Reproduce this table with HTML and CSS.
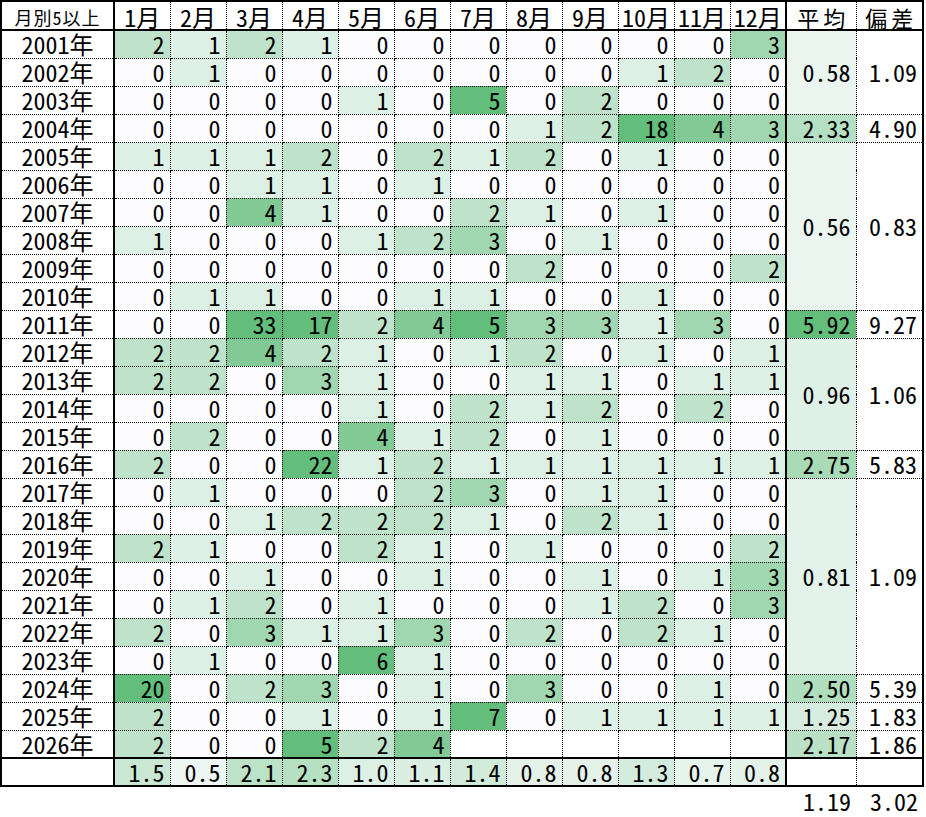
FILE: index.html
```html
<!DOCTYPE html>
<html lang="ja">
<head>
<meta charset="utf-8">
<title>月別5以上</title>
<link rel="stylesheet" href="styles.css">
</head>
<body>
<table class="sheet">
<colgroup>
<col class="c-yr">
<col class="c-m"><col class="c-m"><col class="c-m"><col class="c-m"><col class="c-m"><col class="c-m">
<col class="c-m"><col class="c-m"><col class="c-m"><col class="c-m"><col class="c-m"><col class="c-m">
<col class="c-avg"><col class="c-dev">
</colgroup>
<thead>
<tr class="hdr">
<th class="yr title">月別5以上</th>
<th>1月</th><th>2月</th><th>3月</th><th>4月</th><th>5月</th><th>6月</th><th>7月</th><th>8月</th><th>9月</th><th>10月</th><th>11月</th><th class="last-m">12月</th>
<th class="avg-h">平均</th><th class="dev-h">偏差</th>
</tr>
</thead>
<tbody>
<tr><td class="yr">2001年</td><td class="v2">2</td><td class="v1">1</td><td class="v2">2</td><td class="v1">1</td><td class="v0">0</td><td class="v0">0</td><td class="v0">0</td><td class="v0">0</td><td class="v0">0</td><td class="v0">0</td><td class="v0">0</td><td class="v3 last-m">3</td><td class="avg" rowspan="3" style="background:#eaf5f0">0.58</td><td class="dev" rowspan="3">1.09</td></tr>
<tr><td class="yr">2002年</td><td class="v0">0</td><td class="v1">1</td><td class="v0">0</td><td class="v0">0</td><td class="v0">0</td><td class="v0">0</td><td class="v0">0</td><td class="v0">0</td><td class="v0">0</td><td class="v1">1</td><td class="v2">2</td><td class="v0 last-m">0</td></tr>
<tr><td class="yr">2003年</td><td class="v0">0</td><td class="v0">0</td><td class="v0">0</td><td class="v0">0</td><td class="v1">1</td><td class="v0">0</td><td class="v5">5</td><td class="v0">0</td><td class="v2">2</td><td class="v0">0</td><td class="v0">0</td><td class="v0 last-m">0</td></tr>
<tr><td class="yr">2004年</td><td class="v0">0</td><td class="v0">0</td><td class="v0">0</td><td class="v0">0</td><td class="v0">0</td><td class="v0">0</td><td class="v0">0</td><td class="v1">1</td><td class="v2">2</td><td class="v5">18</td><td class="v4">4</td><td class="v3 last-m">3</td><td class="avg" style="background:#b5dfc2">2.33</td><td class="dev">4.90</td></tr>
<tr><td class="yr">2005年</td><td class="v1">1</td><td class="v1">1</td><td class="v1">1</td><td class="v2">2</td><td class="v0">0</td><td class="v2">2</td><td class="v1">1</td><td class="v2">2</td><td class="v0">0</td><td class="v1">1</td><td class="v0">0</td><td class="v0 last-m">0</td><td class="avg" rowspan="6" style="background:#ebf5f0">0.56</td><td class="dev" rowspan="6">0.83</td></tr>
<tr><td class="yr">2006年</td><td class="v0">0</td><td class="v0">0</td><td class="v1">1</td><td class="v1">1</td><td class="v0">0</td><td class="v1">1</td><td class="v0">0</td><td class="v0">0</td><td class="v0">0</td><td class="v0">0</td><td class="v0">0</td><td class="v0 last-m">0</td></tr>
<tr><td class="yr">2007年</td><td class="v0">0</td><td class="v0">0</td><td class="v4">4</td><td class="v1">1</td><td class="v0">0</td><td class="v0">0</td><td class="v2">2</td><td class="v1">1</td><td class="v0">0</td><td class="v1">1</td><td class="v0">0</td><td class="v0 last-m">0</td></tr>
<tr><td class="yr">2008年</td><td class="v1">1</td><td class="v0">0</td><td class="v0">0</td><td class="v0">0</td><td class="v1">1</td><td class="v2">2</td><td class="v3">3</td><td class="v0">0</td><td class="v1">1</td><td class="v0">0</td><td class="v0">0</td><td class="v0 last-m">0</td></tr>
<tr><td class="yr">2009年</td><td class="v0">0</td><td class="v0">0</td><td class="v0">0</td><td class="v0">0</td><td class="v0">0</td><td class="v0">0</td><td class="v0">0</td><td class="v2">2</td><td class="v0">0</td><td class="v0">0</td><td class="v0">0</td><td class="v2 last-m">2</td></tr>
<tr><td class="yr">2010年</td><td class="v0">0</td><td class="v1">1</td><td class="v1">1</td><td class="v0">0</td><td class="v0">0</td><td class="v1">1</td><td class="v1">1</td><td class="v0">0</td><td class="v0">0</td><td class="v1">1</td><td class="v0">0</td><td class="v0 last-m">0</td></tr>
<tr><td class="yr">2011年</td><td class="v0">0</td><td class="v0">0</td><td class="v5">33</td><td class="v5">17</td><td class="v2">2</td><td class="v4">4</td><td class="v5">5</td><td class="v3">3</td><td class="v3">3</td><td class="v1">1</td><td class="v3">3</td><td class="v0 last-m">0</td><td class="avg" style="background:#63be7b">5.92</td><td class="dev">9.27</td></tr>
<tr><td class="yr">2012年</td><td class="v2">2</td><td class="v2">2</td><td class="v4">4</td><td class="v2">2</td><td class="v1">1</td><td class="v0">0</td><td class="v1">1</td><td class="v2">2</td><td class="v0">0</td><td class="v1">1</td><td class="v0">0</td><td class="v1 last-m">1</td><td class="avg" rowspan="4" style="background:#dff0e6">0.96</td><td class="dev" rowspan="4">1.06</td></tr>
<tr><td class="yr">2013年</td><td class="v2">2</td><td class="v2">2</td><td class="v0">0</td><td class="v3">3</td><td class="v1">1</td><td class="v0">0</td><td class="v0">0</td><td class="v1">1</td><td class="v1">1</td><td class="v0">0</td><td class="v1">1</td><td class="v1 last-m">1</td></tr>
<tr><td class="yr">2014年</td><td class="v0">0</td><td class="v0">0</td><td class="v0">0</td><td class="v0">0</td><td class="v1">1</td><td class="v0">0</td><td class="v2">2</td><td class="v1">1</td><td class="v2">2</td><td class="v0">0</td><td class="v2">2</td><td class="v0 last-m">0</td></tr>
<tr><td class="yr">2015年</td><td class="v0">0</td><td class="v2">2</td><td class="v0">0</td><td class="v0">0</td><td class="v4">4</td><td class="v1">1</td><td class="v2">2</td><td class="v0">0</td><td class="v1">1</td><td class="v0">0</td><td class="v0">0</td><td class="v0 last-m">0</td></tr>
<tr><td class="yr">2016年</td><td class="v2">2</td><td class="v0">0</td><td class="v0">0</td><td class="v5">22</td><td class="v1">1</td><td class="v2">2</td><td class="v1">1</td><td class="v1">1</td><td class="v1">1</td><td class="v1">1</td><td class="v1">1</td><td class="v1 last-m">1</td><td class="avg" style="background:#a8dab6">2.75</td><td class="dev">5.83</td></tr>
<tr><td class="yr">2017年</td><td class="v0">0</td><td class="v1">1</td><td class="v0">0</td><td class="v0">0</td><td class="v0">0</td><td class="v2">2</td><td class="v3">3</td><td class="v0">0</td><td class="v1">1</td><td class="v1">1</td><td class="v0">0</td><td class="v0 last-m">0</td><td class="avg" rowspan="7" style="background:#e3f2ea">0.81</td><td class="dev" rowspan="7">1.09</td></tr>
<tr><td class="yr">2018年</td><td class="v0">0</td><td class="v0">0</td><td class="v1">1</td><td class="v2">2</td><td class="v2">2</td><td class="v2">2</td><td class="v1">1</td><td class="v0">0</td><td class="v2">2</td><td class="v1">1</td><td class="v0">0</td><td class="v0 last-m">0</td></tr>
<tr><td class="yr">2019年</td><td class="v2">2</td><td class="v1">1</td><td class="v0">0</td><td class="v0">0</td><td class="v2">2</td><td class="v1">1</td><td class="v0">0</td><td class="v1">1</td><td class="v0">0</td><td class="v0">0</td><td class="v0">0</td><td class="v2 last-m">2</td></tr>
<tr><td class="yr">2020年</td><td class="v0">0</td><td class="v0">0</td><td class="v1">1</td><td class="v0">0</td><td class="v0">0</td><td class="v1">1</td><td class="v0">0</td><td class="v0">0</td><td class="v1">1</td><td class="v0">0</td><td class="v1">1</td><td class="v3 last-m">3</td></tr>
<tr><td class="yr">2021年</td><td class="v0">0</td><td class="v1">1</td><td class="v2">2</td><td class="v0">0</td><td class="v1">1</td><td class="v0">0</td><td class="v0">0</td><td class="v0">0</td><td class="v1">1</td><td class="v2">2</td><td class="v0">0</td><td class="v3 last-m">3</td></tr>
<tr><td class="yr">2022年</td><td class="v2">2</td><td class="v0">0</td><td class="v3">3</td><td class="v1">1</td><td class="v1">1</td><td class="v3">3</td><td class="v0">0</td><td class="v2">2</td><td class="v0">0</td><td class="v2">2</td><td class="v1">1</td><td class="v0 last-m">0</td></tr>
<tr><td class="yr">2023年</td><td class="v0">0</td><td class="v1">1</td><td class="v0">0</td><td class="v0">0</td><td class="v5">6</td><td class="v1">1</td><td class="v0">0</td><td class="v0">0</td><td class="v0">0</td><td class="v0">0</td><td class="v0">0</td><td class="v0 last-m">0</td></tr>
<tr><td class="yr">2024年</td><td class="v5">20</td><td class="v0">0</td><td class="v2">2</td><td class="v3">3</td><td class="v0">0</td><td class="v1">1</td><td class="v0">0</td><td class="v3">3</td><td class="v0">0</td><td class="v0">0</td><td class="v1">1</td><td class="v0 last-m">0</td><td class="avg" style="background:#b0ddbd">2.50</td><td class="dev">5.39</td></tr>
<tr><td class="yr">2025年</td><td class="v2">2</td><td class="v0">0</td><td class="v0">0</td><td class="v1">1</td><td class="v0">0</td><td class="v1">1</td><td class="v5">7</td><td class="v0">0</td><td class="v1">1</td><td class="v1">1</td><td class="v1">1</td><td class="v1 last-m">1</td><td class="avg" style="background:#d6ecde">1.25</td><td class="dev">1.83</td></tr>
<tr><td class="yr">2026年</td><td class="v2">2</td><td class="v0">0</td><td class="v0">0</td><td class="v5">5</td><td class="v2">2</td><td class="v4">4</td><td class="e"></td><td class="e"></td><td class="e"></td><td class="e"></td><td class="e"></td><td class="e last-m"></td><td class="avg" style="background:#bae1c6">2.17</td><td class="dev">1.86</td></tr>
<tr class="total"><td class="yr"></td><td style="background:#c9e7d2">1.5</td><td style="background:#edf6f2">0.5</td><td style="background:#bce2c8">2.1</td><td style="background:#b6e0c2">2.3</td><td style="background:#ddf0e5">1.0</td><td style="background:#daeee2">1.1</td><td style="background:#d1ebda">1.4</td><td style="background:#e4f2ea">0.8</td><td style="background:#e4f2ea">0.8</td><td style="background:#d4ecdd">1.3</td><td style="background:#e7f3ed">0.7</td><td class="last-m" style="background:#e4f2ea">0.8</td><td class="avg"></td><td class="dev"></td></tr>
<tr class="overall"><td colspan="13"></td><td class="ov">1.19</td><td class="ov">3.02</td></tr>
</tbody>
</table>
</body>
</html>
```

FILE: styles.css
```css
* { box-sizing: border-box; }
html, body { margin: 0; padding: 0; background: #fff; }
body {
  font-family: "Noto Sans CJK JP", sans-serif;
  font-feature-settings: "hwid" 1;
  font-size: 24px;
  color: #000;
}
.sheet {
  border-collapse: collapse;
  table-layout: fixed;
  width: 924px;
}
.c-yr { width: 113px; }
.c-m { width: 56px; }
.c-avg { width: 70px; }
.c-dev { width: 67px; }
.sheet tr { height: 28px; }
.sheet td, .sheet th {
  border: 1px dotted #000;
  padding: 0 5px 0 0;
  text-align: right;
  font-weight: normal;
  white-space: nowrap;
  line-height: 26px;
  vertical-align: middle;
}
.sheet th {
  text-align: center;
  padding: 3px 0 0;
  line-height: 24px;
  border-top: 2px solid #000;
  border-bottom: 2px solid #000;
}
.sheet th.title { font-size: 18px; letter-spacing: 1px; }
.sheet .yr {
  text-align: center;
  border-left: 2px solid #000;
  border-right: 2px solid #000;
}
.sheet td.yr { padding: 0; }
.sheet .last-m { border-right: 2px solid #000; }
.sheet .dev, .sheet .dev-h { border-right: 2px solid #000; }
.sheet .avg-h, .sheet .dev-h { font-size: 22px; letter-spacing: 4px; text-indent: 4px; }
.sheet .dev { background: #fff; }
.total td { border-top: 2px solid #000; border-bottom: 2px solid #000; }
.overall td { border: none; }
.v0 { background: #fcfcff; }
.v1 { background: #ddf0e5; }
.v2 { background: #bfe3ca; }
.v3 { background: #a0d7b0; }
.v4 { background: #82ca95; }
.v5 { background: #63be7b; }
.e { background: #fff; }
```
